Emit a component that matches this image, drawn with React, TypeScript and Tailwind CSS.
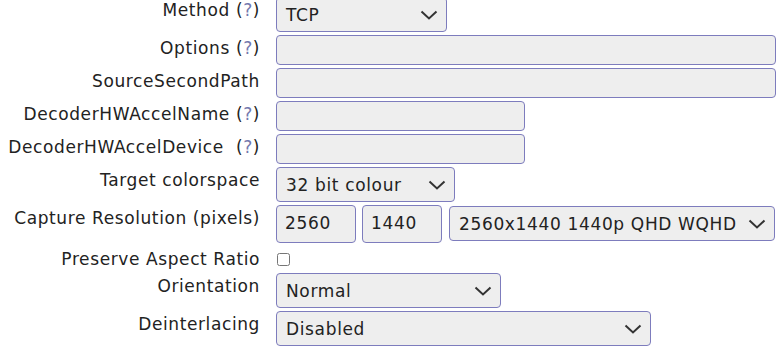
import React from 'react';

const field =
  'h-[30px] rounded-[4px] border border-[#7d7cbd] bg-[#eeeeee] px-[8px] text-[17px] tracking-[0.65px] text-[#222] outline-none';

function Chevron() {
  return (
    <svg
      className="pointer-events-none absolute right-[9px] top-1/2 -translate-y-1/2"
      width="18"
      height="10"
      viewBox="0 0 18 10"
      fill="none"
    >
      <path d="M1.5 1.5 L9 8.5 L16.5 1.5" stroke="#333" strokeWidth="2" />
    </svg>
  );
}

function Select({ value, width }: { value: string; width: string }) {
  return (
    <div className={`relative h-[35px] ${width}`}>
      <div className="flex h-full w-full items-center rounded-[4px] border border-[#7d7cbd] bg-[#eeeeee] pl-[9px] text-[17px] leading-[20px] tracking-[0.65px] text-[#222]">
        {value}
      </div>
      <Chevron />
    </div>
  );
}

function Help() {
  return (
    <>
      {' '}(<span className="text-[#7378ad]">?</span>)
    </>
  );
}

function Row({
  label,
  children,
  minH,
}: {
  label: React.ReactNode;
  children: React.ReactNode;
  minH?: string;
}) {
  return (
    <div className={`flex items-start gap-[16px] ${minH ?? ''}`}>
      <div className="w-[260px] shrink-0 whitespace-pre pt-[3px] text-right text-[17px] leading-[20px] tracking-[0.6px] text-[#222]">
        {label}
      </div>
      <div className="flex items-start">{children}</div>
    </div>
  );
}

export default function App() {
  return (
    <div
      className="h-[355px] overflow-hidden bg-white"
      style={{ fontFamily: '"DejaVu Sans", Verdana, sans-serif' }}
    >
      <div className="-mt-[3px] flex flex-col gap-[3px]">
        <Row label={<>Method<Help /></>}>
          <Select value="TCP" width="w-[171px]" />
        </Row>
        <Row label={<>Options<Help /></>}>
          <div className={`${field} w-[500px]`} />
        </Row>
        <Row label="SourceSecondPath">
          <div className={`${field} w-[500px]`} />
        </Row>
        <Row label={<>DecoderHWAccelName<Help /></>}>
          <div className={`${field} w-[249px]`} />
        </Row>
        <Row label={<>DecoderHWAccelDevice <Help /></>}>
          <div className={`${field} w-[249px]`} />
        </Row>
        <Row label="Target colorspace">
          <Select value="32 bit colour" width="w-[179px]" />
        </Row>
        <Row label="Capture Resolution (pixels)">
          <div className="flex items-start gap-[6px]">
            <div className={`${field} flex h-[38px] w-[80px] items-center`}>2560</div>
            <div className={`${field} flex h-[38px] w-[80px] items-center`}>1440</div>
            <div className="ml-px mt-px">
              <Select value="2560x1440 1440p QHD WQHD" width="w-[326px]" />
            </div>
          </div>
        </Row>
        <Row label="Preserve Aspect Ratio" minH="min-h-[24px]">
          <input
            type="checkbox"
            className="ml-px mt-[7px] h-[13px] w-[13px]"
            readOnly
          />
        </Row>
        <Row label="Orientation">
          <Select value="Normal" width="w-[225px]" />
        </Row>
        <Row label="Deinterlacing">
          <Select value="Disabled" width="w-[375px]" />
        </Row>
      </div>
    </div>
  );
}
